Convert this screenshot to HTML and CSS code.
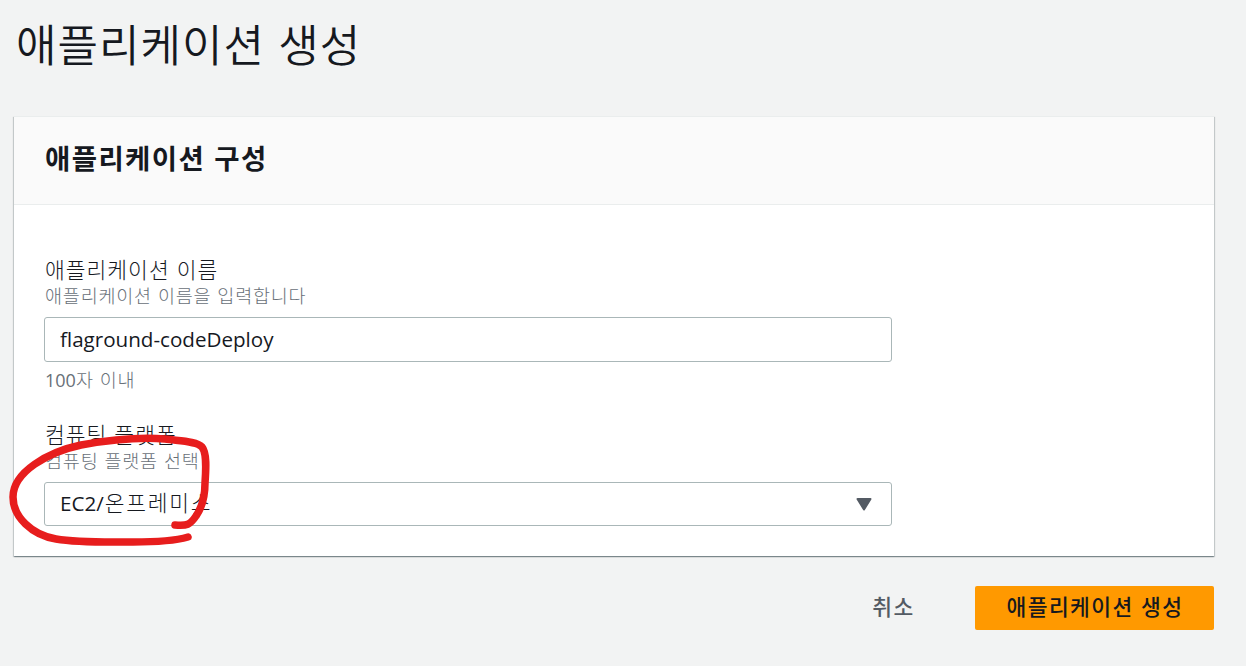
FILE: index.html
```html
<!DOCTYPE html>
<html lang="ko">
<head>
    <meta charset="UTF-8">
    <title>애플리케이션 생성</title>
    <link rel="stylesheet" href="styles.css">
</head>
<body>

<h1>애플리케이션 생성</h1>

<form id="application-form">
    <section class="card">
        <h2>애플리케이션 구성</h2>

        <div class="card-body">
            <label for="name">애플리케이션 이름</label>
            <p class="description">애플리케이션 이름을 입력합니다</p>
            <input type="text" id="name" name="name" value="flaground-codeDeploy">
            <p class="hint"><span class="num">100</span>자 이내</p>

            <label for="platform">컴퓨팅 플랫폼</label>
            <p class="description">컴퓨팅 플랫폼 선택</p>
            <button type="button" class="select" id="platform">
                <span class="select-value">EC2/<span class="ko">온프레미스</span></span>
                <svg class="arrow" width="16" height="13" viewBox="0 0 16 13">
                    <path d="M1.5 1h13L8 11.5z" fill="#545b64" stroke="#545b64" stroke-width="2" stroke-linejoin="round"/>
                </svg>
            </button>
        </div>

        <svg class="marker" width="214" height="120" viewBox="0 0 214 120">
            <path d="M175 92C187 93 190 92 196 83C203 73 205 61 205 50C206 36 207 20 202 14C197 8 180 8 165 6C139 4 109 7 81 12C48 19 13 39 13 64C13 84 32 102 56 106C79 110 111 109 133 109C157 109 174 108 188 104"/>
        </svg>
    </section>

    <div class="actions">
        <button type="button" class="cancel">취소</button>
        <button type="submit" class="submit">애플리케이션 생성</button>
    </div>
</form>

</body>
</html>
```

FILE: styles.css
```css
* {
    box-sizing: border-box;
}

body {
    font-family: "Noto Sans CJK KR", sans-serif;
    font-weight: 300;
    background: #f2f3f3;
    color: #16191f;
    margin: 0;
    padding: 11px 32px 0 14px;
}

h1 {
    height: 105px;
    margin: 0;
    padding-left: 2px;
    font-size: 44px;
    line-height: 64px;
    font-weight: 350;
    letter-spacing: 1px;
}

.card {
    position: relative;
    height: 440px;
    background: white;
    border-top: 1px solid #eaeded;
    box-shadow: 0 1px 1px 0 rgba(0, 28, 36, 0.3), 1px 1px 1px 0 rgba(0, 28, 36, 0.15), -1px 1px 1px 0 rgba(0, 28, 36, 0.15);
}

h2 {
    height: 88px;
    margin: 0;
    padding: 19px 31px;
    background: #fafafa;
    border-bottom: 1px solid #eaeded;
    font-size: 27.5px;
    line-height: 42px;
    font-weight: bold;
    letter-spacing: 1.4px;
}

.card-body {
    width: 878px;
    padding: 50px 0 0 30px;
}

label {
    display: block;
    height: 28px;
    padding-left: 1px;
    font-size: 21.5px;
    line-height: 28px;
    letter-spacing: 1px;
}

p {
    margin: 0;
    padding-left: 1px;
    color: #687078;
    font-size: 18.5px;
    line-height: 24px;
    letter-spacing: 0.8px;
}

.description {
    height: 34px;
}

.hint {
    height: 58px;
    padding-top: 5px;
}

.num {
    font-family: "Open Sans", sans-serif;
    font-weight: 400;
    font-size: 18px;
    letter-spacing: 0;
}

input[type="text"],
.select {
    display: flex;
    align-items: center;
    justify-content: space-between;
    width: 848px;
    height: 45px;
    padding: 0 15px 2px;
    background: white;
    border: 1px solid #aab7b8;
    border-radius: 3px;
    color: #16191f;
    font-family: "Open Sans", "Noto Sans CJK KR", sans-serif;
    font-size: 20.6px;
}

.select {
    height: 44px;
    padding: 0 19px 0 15px;
}

.select-value {
    padding-bottom: 5px;
}

.ko {
    font-size: 21.5px;
    font-weight: 300;
    letter-spacing: 1.7px;
    margin-left: 1px;
}

/* hand-drawn circle around the platform field */
.marker {
    position: absolute;
    left: -14px;
    top: 316px;
    fill: none;
    stroke: #e71d1d;
    stroke-width: 7.5;
    stroke-linecap: round;
    stroke-linejoin: round;
    pointer-events: none;
}

.actions {
    display: flex;
    justify-content: flex-end;
    gap: 30px;
    padding-top: 30px;
}

.actions button {
    height: 44px;
    padding: 0 0 6px 1px;
    border: none;
    border-radius: 2px;
    font-family: "Noto Sans CJK KR", sans-serif;
    font-size: 21.5px;
    font-weight: 500;
    letter-spacing: 1.4px;
}

.actions .cancel {
    width: 104px;
    background: transparent;
    color: #545b64;
}

.actions .submit {
    width: 239px;
    background: #ff9900;
    color: #16191f;
}
```
